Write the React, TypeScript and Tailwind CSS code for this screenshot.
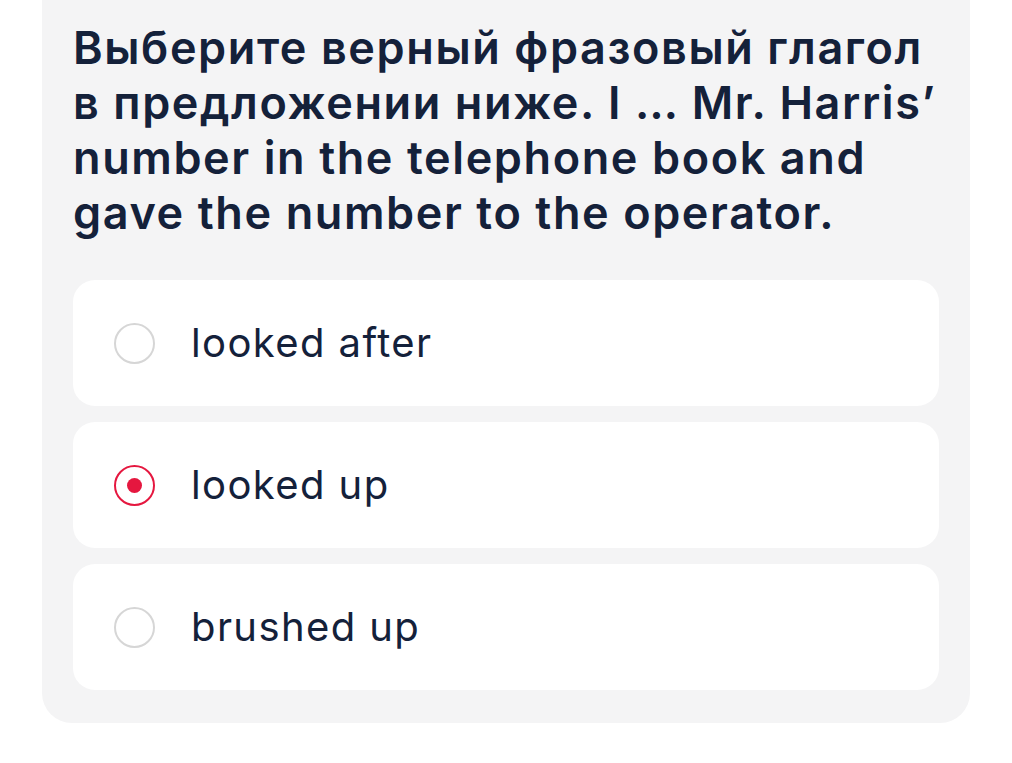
import { useState } from "react";

const options = ["looked after", "looked up", "brushed up"];

const titleLines = [
  "Выберите верный фразовый глагол",
  "в предложении ниже. I … Mr. Harris’",
  "number in the telephone book and",
  "gave the number to the operator.",
];

export default function App() {
  const [selected, setSelected] = useState(1);

  return (
    <div className="min-h-[763px] w-[1012px] bg-white font-['Inter',sans-serif] text-[#14213a]">
      <div className="mx-[42px] rounded-b-[30px] bg-[#f4f4f5] px-[31px] pt-[20px] pb-[33px]">
        <h1 className="text-[45px] font-semibold leading-[55px] tracking-[1.6px] whitespace-nowrap">
          {titleLines.map((line) => (
            <span key={line} className="block">
              {line}
            </span>
          ))}
        </h1>

        <div className="mt-[40px] flex flex-col gap-[16px]">
          {options.map((label, i) => {
            const active = selected === i;
            return (
              <button
                key={label}
                onClick={() => setSelected(i)}
                className="flex h-[126px] items-center gap-[36px] rounded-[22px] bg-white pl-[41px] text-left"
              >
                <span
                  className={
                    active
                      ? "flex h-[41px] w-[41px] flex-shrink-0 items-center justify-center rounded-full border-[2px] border-[#e5173f]"
                      : "h-[41px] w-[41px] flex-shrink-0 rounded-full border-[2px] border-[#d6d6d6]"
                  }
                >
                  {active && <span className="h-[15px] w-[15px] rounded-full bg-[#e5173f]" />}
                </span>
                <span className="text-[40px] font-normal tracking-[1.4px]">{label}</span>
              </button>
            );
          })}
        </div>
      </div>
    </div>
  );
}
